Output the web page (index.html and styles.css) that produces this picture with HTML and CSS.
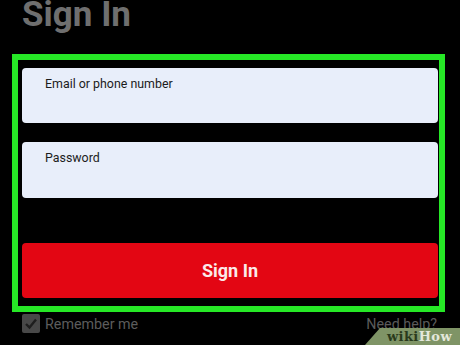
FILE: index.html
```html
<!DOCTYPE html>
<html>
<head>
<meta charset="utf-8">
<link rel="stylesheet" href="styles.css">
</head>
<body>
<h1 class="title">Sign In</h1>
<div class="frame">
  <div class="field field-email"><span class="label">Email or phone number</span></div>
  <div class="field field-pass"><span class="label">Password</span></div>
  <div class="button">Sign In</div>
</div>
<div class="footer">
  <div class="remember">
    <span class="check"><svg width="18" height="19" viewBox="0 0 18 19"><path d="M4 10 L7.5 13.5 L14 5.5" fill="none" stroke="#1e1e1e" stroke-width="2.4"/></svg></span>
    <span>Remember me</span>
  </div>
  <div class="help">Need help?</div>
</div>
<div class="wm"><span class="wm-wiki">wiki</span><span class="wm-how">How</span></div>
</body>
</html>
```
FILE: styles.css
```css
html, body {
  margin: 0;
  padding: 0;
  background: #000;
  width: 460px;
  height: 345px;
  overflow: hidden;
  font-family: Roboto, "Liberation Sans", sans-serif;
}
.title {
  margin: 0 0 24px 0;
  padding-left: 22px;
  height: 30px;
  line-height: 30px;
  font-size: 35px;
  font-weight: 700;
  color: #6f6f6f;
}
.frame {
  margin-left: 12px;
  width: 416px;
  border: 6px solid #26e826;
  padding: 8px 1px 8px 4px;
  display: flex;
  flex-direction: column;
}
.field {
  background: #e8eefa;
  border-radius: 4px;
  padding: 5px 0 0 23px;
  box-sizing: border-box;
}
.field-email { height: 55px; }
.field-pass { height: 56px; margin-top: 19px; padding-top: 5px; }
.label {
  font-size: 12.4px;
  line-height: 16px;
  color: #1c1c1c;
}
.button {
  margin-top: 45px;
  height: 55px;
  background: #e30613;
  border-radius: 4px;
  color: #fbeaea;
  font-size: 18px;
  font-weight: 700;
  display: flex;
  align-items: center;
  justify-content: center;
}
.footer {
  display: flex;
  justify-content: space-between;
  align-items: center;
  padding: 2px 23px 0 22px;
  height: 19px;
  font-size: 14.3px;
  color: #5c5c5c;
}
.remember {
  display: flex;
  align-items: center;
  gap: 5px;
}
.check {
  width: 18px;
  height: 19px;
  background: #484848;
  border-radius: 2px;
  display: block;
}
.check svg { display: block; }
.help { color: #5a5a5a; }
.wm {
  position: absolute;
  left: 365px;
  top: 328px;
  width: 95px;
  height: 17px;
  background: #7f9466;
  clip-path: polygon(15px 0, 100% 0, 100% 100%, 0 100%);
  box-sizing: border-box;
  padding-left: 22px;
  font-family: "DejaVu Serif", "Liberation Serif", serif;
  font-weight: 700;
  font-size: 13px;
  line-height: 17px;
  letter-spacing: 0.4px;
}
.wm-wiki { color: #2a3a1c; }
.wm-how { color: #e4e8dc; }
```
